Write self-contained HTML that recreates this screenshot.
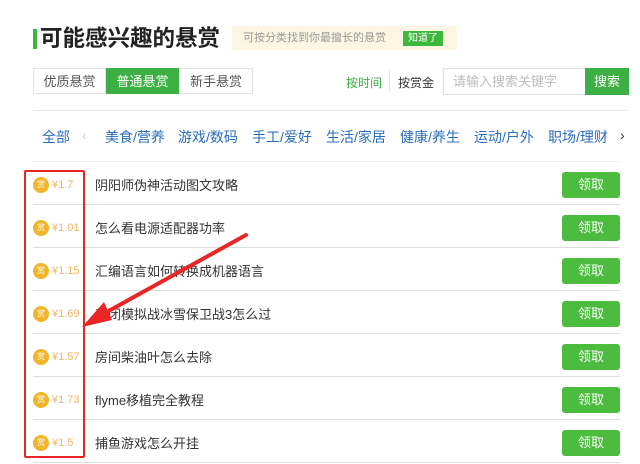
<!DOCTYPE html><html><head><meta charset="utf-8"><style>
*{margin:0;padding:0;box-sizing:border-box}
body{width:640px;height:464px;background:#fff;font-family:"Liberation Sans","Noto Sans CJK SC",sans-serif;position:relative;overflow:hidden;color:#333}
.a{position:absolute}
.tab{position:absolute;top:68px;height:26px;width:73px;font-size:13px;line-height:26px;text-align:center;color:#555;border:1px solid #e3e3e3}
.cat{position:absolute;top:127px;font-size:14px;color:#2a6ebb;white-space:nowrap}
.row{position:absolute;left:33px;width:587px;height:43px;border-bottom:1px solid #ddd}
.coin{position:absolute;left:0;top:15px;width:16px;height:16px;border-radius:50%;background:#f0b52a;color:#fff;font-size:8px;line-height:16px;text-align:center}
.pr{position:absolute;left:19px;top:16px;font-size:11px;color:#f0b461;line-height:15px}
.t{position:absolute;left:62px;top:14px;font-size:13px;color:#333;line-height:19px}
.b{position:absolute;right:0;top:10px;width:58px;height:26px;border-radius:3px;background:#4cbc3f;color:#fff;font-size:13px;line-height:26px;text-align:center}
</style></head><body>
<div class="a" style="left:33px;top:29px;width:4px;height:20px;background:#3cb83c"></div>
<div class="a" style="left:40px;top:24px;font-size:22.5px;font-weight:bold;color:#222;line-height:30px;white-space:nowrap">可能感兴趣的悬赏</div>
<div class="a" style="left:232px;top:26px;width:225px;height:24px;background:#fcf6e2"></div>
<div class="a" style="left:243px;top:30px;font-size:11px;color:#999;line-height:16px">可按分类找到你最擅长的悬赏</div>
<div class="a" style="left:403px;top:31px;width:40px;height:15px;background:#3cb83c;color:#fff;font-size:10px;line-height:15px;text-align:center">知道了</div>
<div class="tab" style="left:33px">优质悬赏</div>
<div class="tab" style="left:106px;background:#3cb043;color:#fff;border-color:#3cb043">普通悬赏</div>
<div class="tab" style="left:179px;width:74px">新手悬赏</div>
<div class="a" style="left:346px;top:74px;font-size:12px;color:#3cb043">按时间</div>
<div class="a" style="left:389px;top:70px;width:1px;height:22px;background:#e3e3e3"></div>
<div class="a" style="left:398px;top:74px;font-size:12px;color:#333">按赏金</div>
<div class="a" style="left:443px;top:68px;width:143px;height:27px;border:1px solid #ddd;font-size:13px;color:#bbb;line-height:25px;padding-left:9px">请输入搜索关键字</div>
<div class="a" style="left:585px;top:68px;width:44px;height:27px;background:#3cb043;color:#fff;font-size:13px;line-height:27px;text-align:center">搜索</div>
<div class="a" style="left:33px;top:110px;width:595px;height:1px;background:#e8e8e8"></div>
<div class="cat" style="left:42px">全部</div>
<div class="cat" style="left:82px;color:#ccc">‹</div>
<div class="cat" style="left:105px">美食/营养</div>
<div class="cat" style="left:178px">游戏/数码</div>
<div class="cat" style="left:252px">手工/爱好</div>
<div class="cat" style="left:326px">生活/家居</div>
<div class="cat" style="left:400px">健康/养生</div>
<div class="cat" style="left:474px">运动/户外</div>
<div class="cat" style="left:548px">职场/理财</div>
<div class="cat" style="left:620px;color:#333">›</div>
<div class="a" style="left:33px;top:161px;width:587px;height:1px;background:#eee"></div>
<div class="row" style="top:162px"><div class="coin">赏</div><div class="pr">¥1.7</div><div class="t">阴阳师伪神活动图文攻略</div><div class="b">领取</div></div>
<div class="row" style="top:205px"><div class="coin">赏</div><div class="pr">¥1.01</div><div class="t">怎么看电源适配器功率</div><div class="b">领取</div></div>
<div class="row" style="top:248px"><div class="coin">赏</div><div class="pr">¥1.15</div><div class="t">汇编语言如何转换成机器语言</div><div class="b">领取</div></div>
<div class="row" style="top:291px"><div class="coin">赏</div><div class="pr">¥1.69</div><div class="t">禁闭模拟战冰雪保卫战3怎么过</div><div class="b">领取</div></div>
<div class="row" style="top:334px"><div class="coin">赏</div><div class="pr">¥1.57</div><div class="t">房间柴油叶怎么去除</div><div class="b">领取</div></div>
<div class="row" style="top:377px"><div class="coin">赏</div><div class="pr">¥1.73</div><div class="t">flyme移植完全教程</div><div class="b">领取</div></div>
<div class="row" style="top:420px"><div class="coin">赏</div><div class="pr">¥1.5</div><div class="t">捕鱼游戏怎么开挂</div><div class="b">领取</div></div>
<div class="a" style="left:24px;top:170px;width:61px;height:288px;border:2px solid #e82626;border-radius:2px"></div>
<svg class="a" style="left:0;top:0" width="640" height="464"><path d="M246 235 L96 318" stroke="#e82626" stroke-width="4" stroke-linecap="round"/><path d="M82 327 L104 302 L112 320 Z" fill="#e82626"/></svg>
</body></html>
